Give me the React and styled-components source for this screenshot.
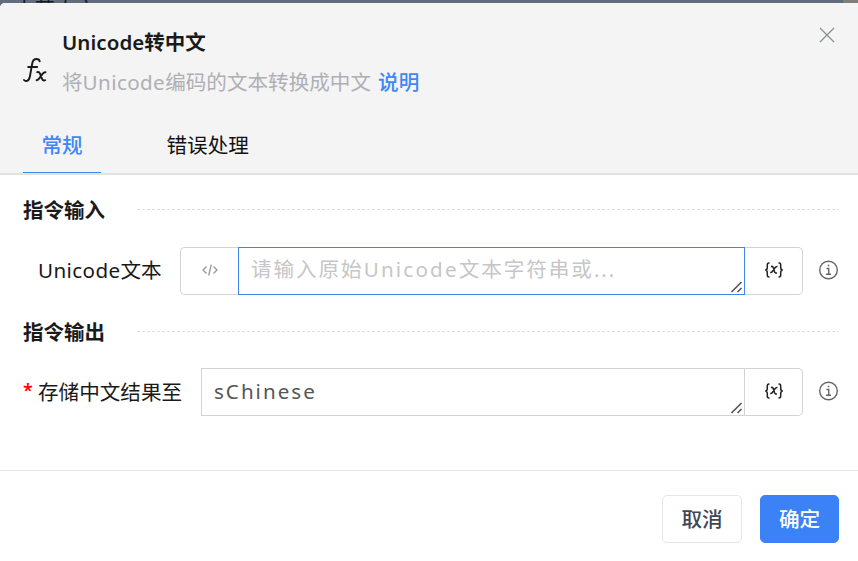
import React from "react";
import styled, { createGlobalStyle } from "styled-components";

const GlobalStyle = createGlobalStyle`
  * { box-sizing: border-box; }
  body {
    margin: 0;
    background: #616d7d;
    color: #1a1a1a;
    font: 20.6px/30px "Noto Sans", "Noto Sans CJK SC", sans-serif;
    overflow: hidden;
  }
  button { font: inherit; }
`;

const Page = styled.div`
  height: 561px;
  overflow: hidden;
  background: linear-gradient(90deg, #616d7d 843px, #807e7b 843px);
`;
const Behind = styled.div`
  height: 3px;
  padding-left: 14px;
  overflow: hidden;
  color: #171a20;
  line-height: 18px;
`;
const Dialog = styled.section`
  height: 558px;
  display: flex;
  flex-direction: column;
  background: #fff;
  border-radius: 5px 0 0 0;
  overflow: hidden;
`;
const Header = styled.header`
  height: 172px;
  flex: none;
  display: flex;
  flex-direction: column;
  justify-content: space-between;
  background: #f4f4f4;
  border-bottom: 2px solid #e2e2e2;
`;
const Heading = styled.div`
  display: flex;
  padding: 24px 23px 0;
`;
const FxIcon = styled.svg`
  width: 24px;
  height: 25px;
  margin: 31px 15px 0 0;
  flex: none;
`;
const Titles = styled.div`
  flex: 1;
`;
const Title = styled.h1`
  margin: 0;
  font-size: 20.5px;
  font-weight: 600;
  line-height: 30px;
`;
const Subtitle = styled.p`
  margin: 10px 0 0;
  line-height: 30px;
  color: #afafb5;
`;
const Link = styled.a`
  margin-left: 7px;
  color: #4086f8;
  font-weight: 500;
`;
const Latin = styled.span`
  letter-spacing: ${(p) => p.$gap || "0.4px"};
`;
const CloseButton = styled.button`
  width: 16px;
  height: 16px;
  padding: 0;
  border: 0;
  background: none;
  display: flex;
`;
const Tabs = styled.nav`
  display: flex;
  gap: 45.5px;
  padding-left: 23px;
`;
const Tab = styled.div`
  height: 45px;
  padding: ${(p) => (p.$active ? "0 18.4px" : "0 20px")};
  line-height: 34px;
  font-weight: ${(p) => (p.$active ? 500 : 400)};
  color: ${(p) => (p.$active ? "#4086f8" : "#111")};
  border-bottom: 1px solid ${(p) => (p.$active ? "#4086e4" : "transparent")};
`;
const Body = styled.main`
  flex: 1;
  padding: 20px 19px 0 23px;
`;
const SectionTitle = styled.h2`
  display: flex;
  align-items: center;
  gap: 32px;
  margin: 0;
  font-size: 20.5px;
  line-height: 30px;
  font-weight: 700;
  &::after {
    content: "";
    flex: 1;
    height: 1px;
    margin-bottom: 2px;
    background: repeating-linear-gradient(90deg, #dedee2 0 3px, transparent 3px 5px);
  }
`;
const Row = styled.div`
  display: flex;
  align-items: center;
  height: 48px;
  margin: ${(p) => (p.$compact ? "21px 0 0" : "22px 0")};
`;
const Label = styled.label`
  width: ${(p) => p.$width};
  padding: 0 0 ${(p) => (p.$lowered ? "0" : "2px")} 15px;
  flex: none;
  position: relative;
`;
const Required = styled.span`
  position: absolute;
  left: 0;
  top: -2px;
  color: #f00;
  font-size: 18px;
  font-weight: 600;
`;
const Addon = styled.div`
  width: 58px;
  height: 48px;
  flex: none;
  display: flex;
  align-items: center;
  justify-content: center;
  padding: 0 0 3px;
  border: 1px solid #d3d3d3;
  ${(p) =>
    p.$side === "left"
      ? "border-right: 0; border-radius: 5px 0 0 5px;"
      : "border-left: 0; border-radius: 0 5px 5px 0;"}
`;
const Field = styled.div`
  flex: 1;
  height: 48px;
  padding: ${(p) => (p.$focused ? "6px" : "7px")} 12px;
  position: relative;
  border: 1px solid ${(p) => (p.$focused ? "#4284ed" : "#d3d3d3")};
  color: ${(p) => (p.$focused ? "#c6c6c6" : "#555")};
  letter-spacing: 1.93px;
  white-space: nowrap;
`;
const Grip = styled.svg`
  position: absolute;
  right: 1px;
  bottom: 1px;
  width: 13px;
  height: 12px;
`;
const Info = styled.svg`
  width: 20px;
  height: 20px;
  margin: -3px 1px 0 15px;
  flex: none;
`;
const Footer = styled.footer`
  height: 91px;
  flex: none;
  display: flex;
  justify-content: flex-end;
  gap: 18px;
  padding: 24px 19px 0;
  border-top: 1px solid #e5e5e5;
`;
const Button = styled.button`
  width: ${(p) => (p.$primary ? "79px" : "80px")};
  height: 48px;
  padding: 0 0 1px;
  border-radius: 5px;
  border: 1px solid ${(p) => (p.$primary ? "#3c82f7" : "#e5e6e8")};
  background: ${(p) => (p.$primary ? "#3c82f7" : "#fff")};
  color: ${(p) => (p.$primary ? "#fff" : "#3e4757")};
  font-weight: 500;
`;

const ResizeGrip = () => (
  <Grip viewBox="0 0 13 12" fill="none" stroke="#555" strokeWidth="1.6">
    <path d="M1.5 11 11.5 1M7.5 11l4-4" />
  </Grip>
);
const VariableIcon = () => (
  <svg width="20" height="18" viewBox="0 0 20 18" fill="none" stroke="#222" strokeWidth="1.5">
    <path d="M5.5 2H5Q3.3 2 3.3 4v2.5Q3.3 9 1.2 9q2.1 0 2.1 2.5V14q0 2 1.7 2h.5M14.5 2h.5q1.7 0 1.7 2v2.5Q16.7 9 18.8 9q-2.1 0-2.1 2.5V14q0 2-1.7 2h-.5" />
    <path d="M7 5.5q1.8-.5 2.4 1.2l1.2 4q.6 1.7 2.3 1M13.5 5.5q-1.3-.3-2.5 1.3L8.7 10q-1.2 1.8-2.5 1.5" />
  </svg>
);
const InfoIcon = () => (
  <Info viewBox="0 0 20 20" fill="none" stroke="#65656a" strokeWidth="1.4">
    <circle cx="10.5" cy="10" r="8.8" />
    <path d="M8.5 8.5h2.2V14M8 14.3h5M9.7 5.5h1.6" />
  </Info>
);

export default function App() {
  return (
    <>
      <GlobalStyle />
      <Page>
        <Behind>中英中文</Behind>
        <Dialog>
          <Header>
            <Heading>
              <FxIcon viewBox="0 0 24 25" fill="none" stroke="#1a1a1a" strokeWidth="1.9" strokeLinecap="round">
                <path d="M1 22q1.2 1.5 3.2.8 2.2-.8 2.8-4.8L9.2 5.5Q10 1 13.5 1q2.8 0 3.2 2.3M5.2 9h9" />
                <path d="M14.2 14.2q1.8-.7 2.6 1l2.4 6q.8 1.8 3 1M22.5 14.2q-1.4-.2-3 1.7l-3 4.2q-1.4 2-2.9 2.1" />
              </FxIcon>
              <Titles>
                <Title><Latin $gap="0.05px">Unicode</Latin>转中文</Title>
                <Subtitle>将<Latin>Unicode</Latin>编码的文本转换成中文<Link>说明</Link></Subtitle>
              </Titles>
              <CloseButton aria-label="关闭">
                <svg width="16" height="16" viewBox="0 0 16 16" stroke="#8b8d94" strokeWidth="1.3">
                  <path d="m1 1 14 14M15 1 1 15" />
                </svg>
              </CloseButton>
            </Heading>
            <Tabs>
              <Tab $active>常规</Tab>
              <Tab>错误处理</Tab>
            </Tabs>
          </Header>
          <Body>
            <SectionTitle>指令输入</SectionTitle>
            <Row>
              <Label $width="157px"><Latin>Unicode</Latin>文本</Label>
              <Addon $side="left">
                <svg width="16" height="14" viewBox="0 0 16 14" fill="none" stroke="#9298a5" strokeWidth="1.3">
                  <path d="M4.5 3.5 1 7l3.5 3.5M11.5 3.5 15 7l-3.5 3.5M9.3 1.5l-2.6 11" />
                </svg>
              </Addon>
              <Field $focused>请输入原始<Latin $gap="2.2px">Unicode</Latin>文本字符串或...<ResizeGrip /></Field>
              <Addon><VariableIcon /></Addon>
              <InfoIcon />
            </Row>
            <SectionTitle>指令输出</SectionTitle>
            <Row $compact>
              <Label $width="178px" $lowered><Required>*</Required>存储中文结果至</Label>
              <Field><Latin $gap="2px">sChinese</Latin><ResizeGrip /></Field>
              <Addon><VariableIcon /></Addon>
              <InfoIcon />
            </Row>
          </Body>
          <Footer>
            <Button>取消</Button>
            <Button $primary>确定</Button>
          </Footer>
        </Dialog>
      </Page>
    </>
  );
}
